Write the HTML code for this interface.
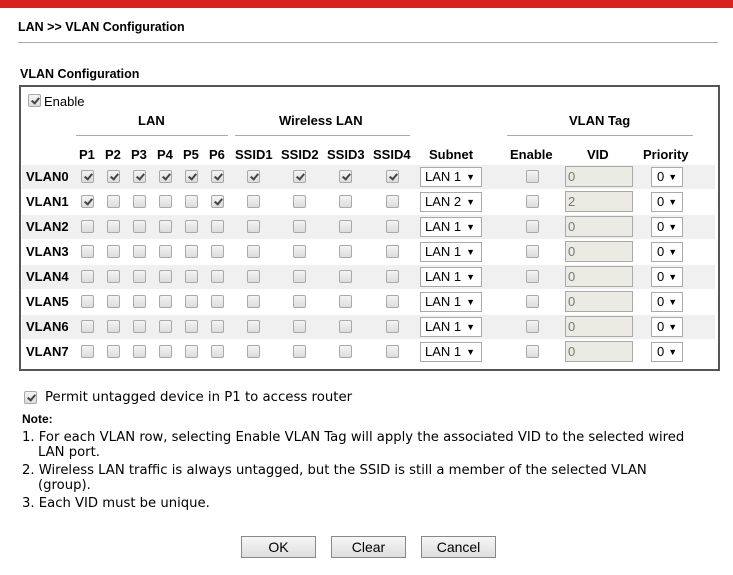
<!DOCTYPE html>
<html><head><meta charset="utf-8"><style>
*{margin:0;padding:0;box-sizing:border-box}
body{width:733px;height:575px;background:#fff;position:relative;overflow:hidden;font-family:"Liberation Sans",Arial,sans-serif;color:#000}
.a{position:absolute}
.red{left:0;top:0;width:733px;height:8px;background:#d9231f}
.t{font-weight:bold;font-size:12.5px}
.box{left:19px;top:85px;width:701px;height:286px;border:2px solid #555}
.r{position:absolute;left:0;width:733px;height:25px}
.r.s::before{content:"";position:absolute;left:22px;width:693px;top:1px;height:24px;background:#f0f0f0}
.lb{position:absolute;left:26px;top:5px;font-weight:bold;font-size:13px}
.c{position:absolute;top:6px;width:13px;height:13px;border:1px solid #a9a9a9;border-radius:2px;background:linear-gradient(#f4f4f4,#dcdcdc)}
.c.k::after{content:"";position:absolute;left:4px;top:1px;width:3px;height:6px;border:solid #444;border-width:0 2px 2px 0;transform:rotate(40deg)}
.sel{position:absolute;left:420px;top:3px;width:62px;height:20px;border:1px solid #a9a9a9;background:#fff;font-size:13px;padding:1px 0 0 4px}
.sel i{font-style:normal;font-size:9px;margin-left:5px;position:relative;top:-1px}
.vid{position:absolute;left:565px;top:2px;width:68px;height:21px;border:1px solid #a9a9a9;background:#ebebe4;color:#777;font-size:13px;padding:2px 0 0 2px}
.pr{position:absolute;left:651px;top:3px;width:32px;height:20px;border:1px solid #a9a9a9;background:#fff;font-size:13px;padding:1px 0 0 5px}
.pr i{font-style:normal;font-size:9px;margin-left:4px;position:relative;top:-1px}
.h{font-weight:bold;font-size:13px;position:absolute}
.ln{position:absolute;top:135px;height:1px;background:#aaa}
.x1{left:81px}.x2{left:107px}.x3{left:133px}.x4{left:159px}.x5{left:185px}.x6{left:211px}.x7{left:247px}.x8{left:293px}.x9{left:339px}.x10{left:386px}.x11{left:526px}
.n{font-family:"DejaVu Sans",sans-serif;font-size:13.3px}
.btn{top:536px;width:75px;height:22px;border:1px solid #888;background:linear-gradient(#f6f6f6,#dedede);font-size:14px;text-align:center;line-height:20px}
</style></head><body>
<div class="a red"></div>
<div class="a t" style="left:18px;top:20px">LAN &gt;&gt; VLAN Configuration</div>
<div class="a" style="left:18px;top:42px;width:700px;height:1px;background:#aaa"></div>
<div class="a t" style="left:20px;top:67px">VLAN Configuration</div>
<div class="a box"></div>
<span class="c k" style="left:28px;top:94px"></span>
<div class="a" style="left:44px;top:94px;font-size:13px">Enable</div>
<div class="h" style="left:138px;top:113px">LAN</div>
<div class="h" style="left:279px;top:113px">Wireless LAN</div>
<div class="h" style="left:569px;top:113px">VLAN Tag</div>
<div class="ln" style="left:76px;width:152px"></div>
<div class="ln" style="left:235px;width:175px"></div>
<div class="ln" style="left:507px;width:186px"></div>
<div class="h" style="left:79px;top:147px">P1</div>
<div class="h" style="left:105px;top:147px">P2</div>
<div class="h" style="left:131px;top:147px">P3</div>
<div class="h" style="left:157px;top:147px">P4</div>
<div class="h" style="left:183px;top:147px">P5</div>
<div class="h" style="left:209px;top:147px">P6</div>
<div class="h" style="left:235px;top:147px">SSID1</div>
<div class="h" style="left:281px;top:147px">SSID2</div>
<div class="h" style="left:327px;top:147px">SSID3</div>
<div class="h" style="left:373px;top:147px">SSID4</div>
<div class="h" style="left:429px;top:147px">Subnet</div>
<div class="h" style="left:510px;top:147px">Enable</div>
<div class="h" style="left:587px;top:147px">VID</div>
<div class="h" style="left:643px;top:147px">Priority</div>

<div class="r s" style="top:164px"><span class="lb">VLAN0</span><span class="c k x1"></span><span class="c k x2"></span><span class="c k x3"></span><span class="c k x4"></span><span class="c k x5"></span><span class="c k x6"></span><span class="c k x7"></span><span class="c k x8"></span><span class="c k x9"></span><span class="c k x10"></span><span class="sel">LAN 1<i>▼</i></span><span class="c x11"></span><span class="vid">0</span><span class="pr">0<i>▼</i></span></div>
<div class="r" style="top:189px"><span class="lb">VLAN1</span><span class="c k x1"></span><span class="c x2"></span><span class="c x3"></span><span class="c x4"></span><span class="c x5"></span><span class="c k x6"></span><span class="c x7"></span><span class="c x8"></span><span class="c x9"></span><span class="c x10"></span><span class="sel">LAN 2<i>▼</i></span><span class="c x11"></span><span class="vid">2</span><span class="pr">0<i>▼</i></span></div>
<div class="r s" style="top:214px"><span class="lb">VLAN2</span><span class="c x1"></span><span class="c x2"></span><span class="c x3"></span><span class="c x4"></span><span class="c x5"></span><span class="c x6"></span><span class="c x7"></span><span class="c x8"></span><span class="c x9"></span><span class="c x10"></span><span class="sel">LAN 1<i>▼</i></span><span class="c x11"></span><span class="vid">0</span><span class="pr">0<i>▼</i></span></div>
<div class="r" style="top:239px"><span class="lb">VLAN3</span><span class="c x1"></span><span class="c x2"></span><span class="c x3"></span><span class="c x4"></span><span class="c x5"></span><span class="c x6"></span><span class="c x7"></span><span class="c x8"></span><span class="c x9"></span><span class="c x10"></span><span class="sel">LAN 1<i>▼</i></span><span class="c x11"></span><span class="vid">0</span><span class="pr">0<i>▼</i></span></div>
<div class="r s" style="top:264px"><span class="lb">VLAN4</span><span class="c x1"></span><span class="c x2"></span><span class="c x3"></span><span class="c x4"></span><span class="c x5"></span><span class="c x6"></span><span class="c x7"></span><span class="c x8"></span><span class="c x9"></span><span class="c x10"></span><span class="sel">LAN 1<i>▼</i></span><span class="c x11"></span><span class="vid">0</span><span class="pr">0<i>▼</i></span></div>
<div class="r" style="top:289px"><span class="lb">VLAN5</span><span class="c x1"></span><span class="c x2"></span><span class="c x3"></span><span class="c x4"></span><span class="c x5"></span><span class="c x6"></span><span class="c x7"></span><span class="c x8"></span><span class="c x9"></span><span class="c x10"></span><span class="sel">LAN 1<i>▼</i></span><span class="c x11"></span><span class="vid">0</span><span class="pr">0<i>▼</i></span></div>
<div class="r s" style="top:314px"><span class="lb">VLAN6</span><span class="c x1"></span><span class="c x2"></span><span class="c x3"></span><span class="c x4"></span><span class="c x5"></span><span class="c x6"></span><span class="c x7"></span><span class="c x8"></span><span class="c x9"></span><span class="c x10"></span><span class="sel">LAN 1<i>▼</i></span><span class="c x11"></span><span class="vid">0</span><span class="pr">0<i>▼</i></span></div>
<div class="r" style="top:339px"><span class="lb">VLAN7</span><span class="c x1"></span><span class="c x2"></span><span class="c x3"></span><span class="c x4"></span><span class="c x5"></span><span class="c x6"></span><span class="c x7"></span><span class="c x8"></span><span class="c x9"></span><span class="c x10"></span><span class="sel">LAN 1<i>▼</i></span><span class="c x11"></span><span class="vid">0</span><span class="pr">0<i>▼</i></span></div>

<span class="c k" style="left:24px;top:391px"></span>
<div class="a n" style="left:45px;top:390px;font-size:13.3px">Permit untagged device in P1 to access router</div>
<div class="a t" style="left:22px;top:412px;font-size:12px">Note:</div>
<div class="a n" style="left:22px;top:430px;line-height:15px;width:711px;font-size:13.2px">
<div>1.&nbsp;For each VLAN row, selecting Enable VLAN Tag will apply the associated VID to the selected wired</div>
<div style="padding-left:16px">LAN port.</div>
<div style="margin-top:3px">2.&nbsp;Wireless LAN traffic is always untagged, but the SSID is still a member of the selected VLAN</div>
<div style="padding-left:16px">(group).</div>
<div style="margin-top:3px">3.&nbsp;Each VID must be unique.</div>
</div>
<div class="a btn" style="left:241px">OK</div>
<div class="a btn" style="left:331px">Clear</div>
<div class="a btn" style="left:421px">Cancel</div>
</body></html>
